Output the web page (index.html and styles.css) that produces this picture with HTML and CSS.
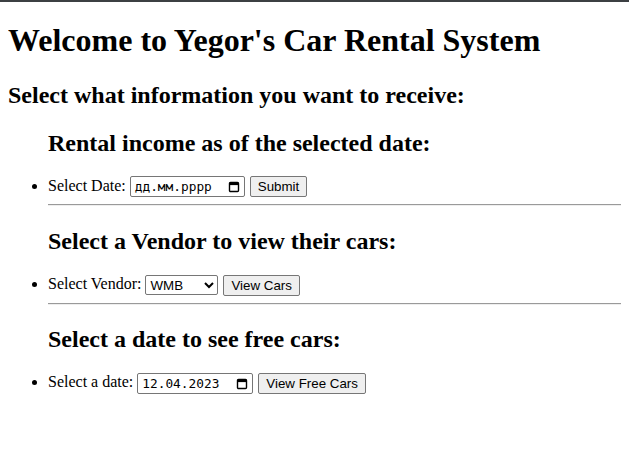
FILE: index.html
```html
<!DOCTYPE html>
<html lang="ru">
<head>
<meta charset="utf-8">
<title>Yegor's Car Rental System</title>
<link rel="stylesheet" href="styles.css">
</head>
<body class="page">
<h1 class="title">Welcome to Yegor's Car Rental System</h1>
<h2 class="subtitle">Select what information you want to receive:</h2>
<ul class="sections">
  <h2 class="section-title">Rental income as of the selected date:</h2>
  <li class="row">
    <form class="row-form"><span class="label">Select Date:</span><span class="date-field"><span class="date-text">дд.мм.рррр</span><svg class="cal" width="12" height="12" viewBox="0 0 12 12"><rect x="1.5" y="1.5" width="9" height="9" rx="1" fill="none" stroke="#000" stroke-width="1.4"/><rect x="1.5" y="1.5" width="9" height="2.6" fill="#000"/></svg></span><button class="btn" type="button">Submit</button></form>
  </li>
  <hr class="rule">
  <h2 class="section-title">Select a Vendor to view their cars:</h2>
  <li class="row">
    <form class="row-form"><span class="label">Select Vendor:</span><select class="vendor"><option>WMB</option><option>Toyota</option></select><button class="btn" type="button">View Cars</button></form>
  </li>
  <hr class="rule">
  <h2 class="section-title">Select a date to see free cars:</h2>
  <li class="row">
    <form class="row-form"><span class="label">Select a date:</span><span class="date-field wide"><span class="date-text">12.04.2023</span><svg class="cal" width="12" height="12" viewBox="0 0 12 12"><rect x="1.5" y="1.5" width="9" height="9" rx="1" fill="none" stroke="#000" stroke-width="1.4"/><rect x="1.5" y="1.5" width="9" height="2.6" fill="#000"/></svg></span><button class="btn" type="button">View Free Cars</button></form>
  </li>
</ul>
</body>
</html>
```
FILE: styles.css
```css
html { background: #fff; overflow-x: hidden; }
.page {
  margin: 8px;
  font-family: "Liberation Serif", "Times New Roman", serif;
  font-size: 16px;
  color: #000;
}
.page::before {
  content: "";
  position: fixed;
  left: 0; right: 0; top: 0;
  height: 2px;
  background: #3c4043;
}
.title { font-size: 32px; line-height: 37px; margin: 14.44px 0 21.44px; }
.subtitle, .section-title { font-size: 24px; line-height: 28px; margin: 19.92px 0; }
.sections { margin: 16px 0; padding-left: 40px; }
.row { line-height: 18px; }
.row-form {
  margin: 0;
  display: flex;
  align-items: center;
  gap: 4px;
  height: 20.5px;
}
.label { align-self: flex-start; }
.date-field {
  display: inline-flex;
  align-items: center;
  justify-content: space-between;
  box-sizing: border-box;
  width: 115px;
  height: 21px;
  border: 1px solid #767676;
  border-radius: 2px;
  padding: 0 4px;
  font-family: "DejaVu Sans Mono", monospace;
  font-size: 12.8px;
  color: #000;
  background: #fff;
}
.date-field.wide { width: 116px; }
.cal { display: block; }
.btn {
  box-sizing: border-box;
  margin-left: 1px;
  font-family: "Liberation Sans", Arial, sans-serif;
  font-size: 13.333px;
  padding: 2px 7px;
  border: 1px solid #767676;
  border-radius: 2px;
  background: #efefef;
  color: #000;
  height: 21px;
  line-height: 15px;
}
.vendor {
  box-sizing: border-box;
  font-family: "Liberation Sans", Arial, sans-serif;
  font-size: 13.333px;
  width: 73px;
  height: 20px;
  border: 1px solid #767676;
  border-radius: 2px;
  background: #fff;
  color: #000;
}
.rule {
  box-sizing: border-box;
  width: calc(100% + 16px);
  margin: 7px 0 20.92px 0;
  border: 0;
  border-top: 1px solid #9a9a9a;
  border-bottom: 1px solid #eee;
  height: 2px;
}
```
